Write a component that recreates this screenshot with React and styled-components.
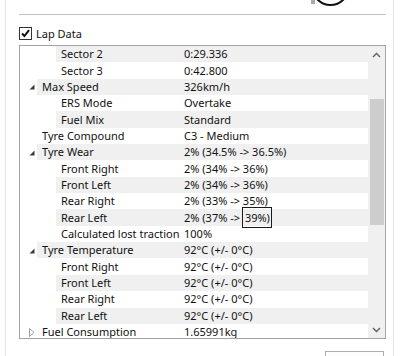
import React from "react";
import styled, { createGlobalStyle } from "styled-components";

const GlobalStyle = createGlobalStyle`
  html, body {
    margin: 0;
    padding: 0;
    background: #ffffff;
  }
  body {
    font-family: "Noto Sans", "Open Sans", sans-serif;
    font-size: 11px;
    color: #111111;
  }
`;

const rows = [
  { name: "Sector 2", value: "0:29.336", level: 1 },
  { name: "Sector 3", value: "0:42.800", level: 1 },
  { name: "Max Speed", value: "326km/h", level: 0, toggle: "open" },
  { name: "ERS Mode", value: "Overtake", level: 1 },
  { name: "Fuel Mix", value: "Standard", level: 1 },
  { name: "Tyre Compound", value: "C3 - Medium", level: 0 },
  { name: "Tyre Wear", value: "2% (34.5% -> 36.5%)", level: 0, toggle: "open" },
  { name: "Front Right", value: "2% (34% -> 36%)", level: 1 },
  { name: "Front Left", value: "2% (34% -> 36%)", level: 1 },
  { name: "Rear Right", value: "2% (33% -> 35%)", level: 1 },
  { name: "Rear Left", value: "2% (37% -> ", mark: "39%)", level: 1 },
  { name: "Calculated lost traction", value: "100%", level: 1 },
  { name: "Tyre Temperature", value: "92°C (+/- 0°C)", level: 0, toggle: "open" },
  { name: "Front Right", value: "92°C (+/- 0°C)", level: 1 },
  { name: "Front Left", value: "92°C (+/- 0°C)", level: 1 },
  { name: "Rear Right", value: "92°C (+/- 0°C)", level: 1 },
  { name: "Rear Left", value: "92°C (+/- 0°C)", level: 1 },
  { name: "Fuel Consumption", value: "1.65991kg", level: 0, toggle: "closed" },
];

function Toggle({ state }) {
  if (state === "open") {
    return (
      <svg width="6" height="6" viewBox="0 0 6 6">
        <path d="M5.5 0.5 L5.5 5.5 L0.5 5.5 Z" fill="#3a3a3a" />
      </svg>
    );
  }
  if (state === "closed") {
    return (
      <svg width="6" height="9" viewBox="0 0 6 9">
        <path d="M0.5 0.5 L5 4.5 L0.5 8.5 Z" fill="none" stroke="#a0a0a0" strokeWidth="1" />
      </svg>
    );
  }
  return null;
}

function Chevron({ down }) {
  return (
    <svg width="9" height="6" viewBox="0 0 9 6">
      <path
        d={down ? "M1 1 L4.5 4.5 L8 1" : "M1 5 L4.5 1.5 L8 5"}
        fill="none"
        stroke="#606060"
        strokeWidth="1.4"
      />
    </svg>
  );
}

export default function App() {
  return (
    <Page>
      <GlobalStyle />
      <Frame>
        <TopGroup>
          <svg width="40" height="14" viewBox="0 0 40 14">
            <line x1="-1" y1="0" x2="-1" y2="4" stroke="#555" strokeWidth="1" />
            <line x1="1" y1="0" x2="1" y2="4" stroke="#555" strokeWidth="1" />
            <circle cx="17.5" cy="-13" r="18" fill="none" stroke="#111" strokeWidth="2" />
          </svg>
        </TopGroup>

        <CheckRow>
          <CheckBox>
            <svg width="11" height="11" viewBox="0 0 11 11">
              <path d="M2 5.5 L4.4 8 L9 2.2" fill="none" stroke="#111" strokeWidth="2" />
            </svg>
          </CheckBox>
          <CheckLabel>Lap Data</CheckLabel>
        </CheckRow>

        <ListBox>
          <Rows>
            {rows.map((row, i) => (
              <Row key={i}>
                <Expander $level={row.level}>
                  <Toggle state={row.toggle} />
                </Expander>
                <Band $striped={i % 2 === 0}>
                  <Name $level={row.level}>{row.name}</Name>
                  <Value>
                    {row.value}
                    {row.mark && <Marked>{row.mark}</Marked>}
                  </Value>
                </Band>
              </Row>
            ))}
          </Rows>
          <ScrollBar>
            <ScrollButton>
              <Chevron />
            </ScrollButton>
            <Track>
              <Thumb />
            </Track>
            <ScrollButton>
              <Chevron down />
            </ScrollButton>
          </ScrollBar>
        </ListBox>

        <BottomButton />
      </Frame>
    </Page>
  );
}

const Page = styled.div`
  width: 400px;
  height: 356px;
  overflow: hidden;
  background: #ffffff;
`;

const Frame = styled.div`
  margin-left: 5px;
  width: 389px;
  height: 356px;
  box-sizing: border-box;
  border-left: 1px solid #e4e4e4;
  border-right: 1px solid #e4e4e4;
  padding: 0 7px 0 13px;
  display: flex;
  flex-direction: column;
`;

const TopGroup = styled.div`
  height: 14px;
  flex: none;
  border-bottom: 1px solid #c2c2c2;
  display: flex;
  justify-content: flex-end;
  svg {
    margin-right: 33px;
    overflow: visible;
  }
`;

const CheckRow = styled.div`
  margin-top: 12px;
  height: 13px;
  flex: none;
  display: flex;
  align-items: center;
  gap: 4px;
`;

const CheckBox = styled.div`
  width: 13px;
  height: 13px;
  box-sizing: border-box;
  border: 1px solid #333333;
  background: #ffffff;
  display: flex;
  align-items: center;
  justify-content: center;
`;

const CheckLabel = styled.span`
  font-size: 11px;
  line-height: 13px;
`;

const ListBox = styled.div`
  margin-top: 5px;
  height: 294px;
  flex: none;
  box-sizing: border-box;
  border: 1px solid #a3a3a3;
  display: flex;
  overflow: hidden;
`;

const Rows = styled.div`
  flex: 1;
  overflow: hidden;
`;

const Row = styled.div`
  height: 16.35px;
  display: flex;
`;

const Expander = styled.div`
  flex: none;
  box-sizing: border-box;
  width: ${(p) => 17 + p.$level * 19}px;
  padding-left: ${(p) => 9 + p.$level * 19}px;
  display: flex;
  align-items: center;
  svg {
    margin-top: 1px;
  }
`;

const Band = styled.div`
  flex: 1;
  display: flex;
  align-items: center;
  padding-left: 5px;
  background: ${(p) => (p.$striped ? "#f0f0f0" : "transparent")};
  line-height: 16px;
  white-space: nowrap;
`;

const Name = styled.span`
  flex: none;
  width: ${(p) => 142 - p.$level * 19}px;
  overflow: hidden;
`;

const Value = styled.span`
  flex: 1;
`;

const Marked = styled.span`
  border: 1px solid #1b1b1b;
  padding: 2px 1px 2px 2px;
  margin-left: -1px;
`;

const ScrollBar = styled.div`
  width: 17px;
  flex: none;
  background: #f0f0f0;
  display: flex;
  flex-direction: column;
`;

const ScrollButton = styled.div`
  height: 17px;
  flex: none;
  display: flex;
  align-items: center;
  justify-content: center;
`;

const Track = styled.div`
  flex: 1;
  padding-top: 36px;
`;

const Thumb = styled.div`
  height: 126px;
  margin: 0 1px 0 2px;
  background: #cdcdcd;
`;

const BottomButton = styled.div`
  margin-top: 12px;
  margin-left: auto;
  margin-right: 2px;
  width: 59px;
  height: 20px;
  flex: none;
  box-sizing: border-box;
  border: 1px solid #adadad;
  background: #fdfdfd;
`;
